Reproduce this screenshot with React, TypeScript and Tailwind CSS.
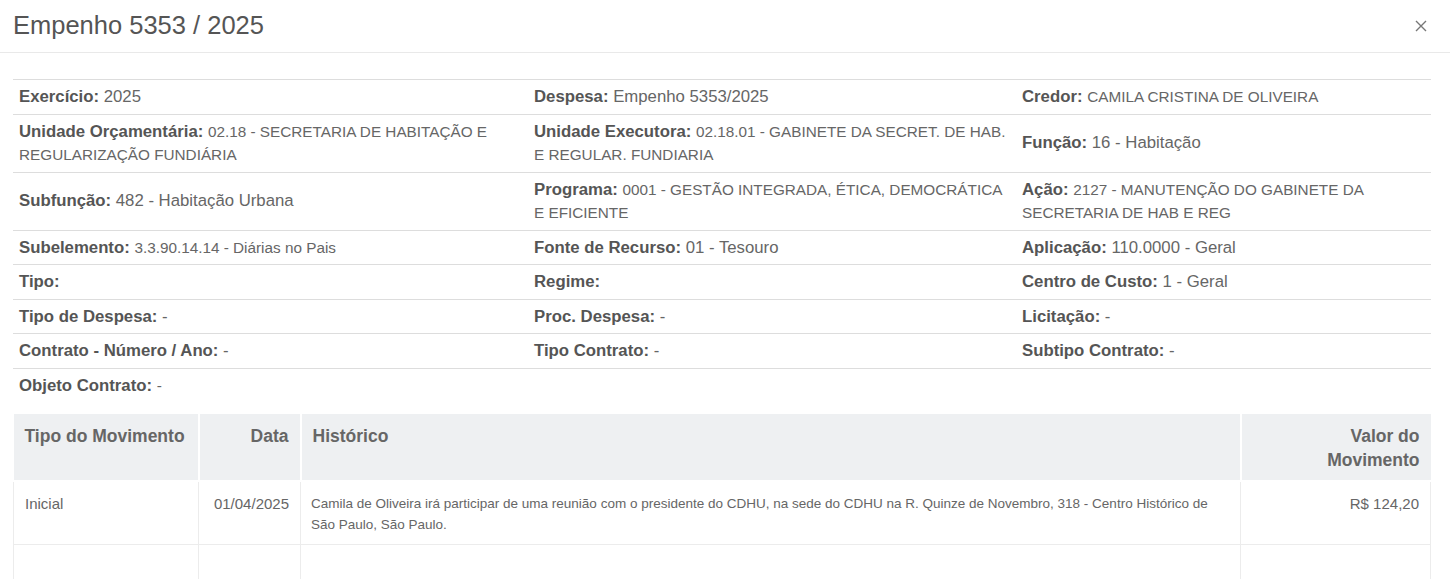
import React from 'react'

type Field = {
  label: string
  value?: string
  small?: boolean
}

const rows: Field[][] = [
  [
    { label: 'Exercício', value: '2025' },
    { label: 'Despesa', value: 'Empenho 5353/2025' },
    { label: 'Credor', value: 'CAMILA CRISTINA DE OLIVEIRA', small: true },
  ],
  [
    { label: 'Unidade Orçamentária', value: '02.18 - SECRETARIA DE HABITAÇÃO E REGULARIZAÇÃO FUNDIÁRIA', small: true },
    { label: 'Unidade Executora', value: '02.18.01 - GABINETE DA SECRET. DE HAB. E REGULAR. FUNDIARIA', small: true },
    { label: 'Função', value: '16 - Habitação' },
  ],
  [
    { label: 'Subfunção', value: '482 - Habitação Urbana' },
    { label: 'Programa', value: '0001 - GESTÃO INTEGRADA, ÉTICA, DEMOCRÁTICA E EFICIENTE', small: true },
    { label: 'Ação', value: '2127 - MANUTENÇÃO DO GABINETE DA SECRETARIA DE HAB E REG', small: true },
  ],
  [
    { label: 'Subelemento', value: '3.3.90.14.14 - Diárias no Pais', small: true },
    { label: 'Fonte de Recurso', value: '01 - Tesouro' },
    { label: 'Aplicação', value: '110.0000 - Geral' },
  ],
  [{ label: 'Tipo' }, { label: 'Regime' }, { label: 'Centro de Custo', value: '1 - Geral' }],
  [
    { label: 'Tipo de Despesa', value: '-' },
    { label: 'Proc. Despesa', value: '-' },
    { label: 'Licitação', value: '-' },
  ],
  [
    { label: 'Contrato - Número / Ano', value: '-' },
    { label: 'Tipo Contrato', value: '-' },
    { label: 'Subtipo Contrato', value: '-' },
  ],
]

const FieldCell = ({ field }: { field: Field }) => (
  <td className="border-t border-[#dddddd] px-[6px] py-[5px] align-middle leading-[23.5px]">
    <span className="font-bold text-[#555]">{field.label}: </span>
    {field.value && (
      <span className={field.small ? 'text-[15.3px] text-[#666]' : 'text-[#666]'}>{field.value}</span>
    )}
  </td>
)

const App = () => {
  return (
    <div className="w-[1450px] min-h-[579px] bg-white font-['Liberation_Sans',Arial,sans-serif] text-[#666]">
      {/* header */}
      <div className="flex h-[53px] items-center justify-between border-b border-[#e9e9e9] pl-[13px] pr-[22px]">
        <h4 className="text-[25.5px] leading-none text-[#555]">Empenho 5353 / 2025</h4>
        <button className="flex h-[14px] w-[14px] items-center justify-center text-[#777]">
          <svg width="12" height="12" viewBox="0 0 12 12" fill="none" stroke="currentColor" strokeWidth="1.4">
            <path d="M1 1l10 10M11 1L1 11" />
          </svg>
        </button>
      </div>

      {/* body */}
      <div className="pl-[13px] pr-[19px] pt-[26px]">
        <table className="mb-[12px] w-full table-fixed border-collapse text-[16.75px]">
          <colgroup>
            <col className="w-[515px]" />
            <col className="w-[488px]" />
            <col />
          </colgroup>
          <tbody>
            {rows.map((row, i) => (
              <tr key={i}>
                {row.map((f) => (
                  <FieldCell key={f.label} field={f} />
                ))}
              </tr>
            ))}
            <tr>
              <FieldCell field={{ label: 'Objeto Contrato', value: '-', small: true }} />
              <td className="border-t border-[#dddddd]" />
              <td className="border-t border-[#dddddd]" />
            </tr>
          </tbody>
        </table>

        <table className="w-full table-fixed border-collapse">
          <colgroup>
            <col className="w-[185px]" />
            <col className="w-[102px]" />
            <col />
            <col className="w-[190px]" />
          </colgroup>
          <thead>
            <tr className="bg-[#eef0f2] text-[17.5px] font-bold leading-[24px] text-[#666]">
              <th className="border-b-2 border-r-2 border-white px-[11px] pb-[8px] pt-[10px] text-left align-top">
                Tipo do Movimento
              </th>
              <th className="border-b-2 border-r-2 border-white px-[11px] pb-[8px] pt-[10px] text-right align-top">
                Data
              </th>
              <th className="border-b-2 border-r-2 border-white px-[11px] pb-[8px] pt-[10px] text-left align-top">
                Histórico
              </th>
              <th className="border-b-2 border-white px-[11px] pb-[8px] pt-[10px] text-right align-top">
                Valor do
                <br />
                Movimento
              </th>
            </tr>
          </thead>
          <tbody className="text-[15px] leading-[21px] text-[#666]">
            <tr>
              <td className="border border-t-0 border-[#ececec] px-[11px] pb-[9px] pt-[11px] align-top">Inicial</td>
              <td className="border border-t-0 border-[#ececec] px-[11px] pb-[9px] pt-[11px] text-right align-top">
                01/04/2025
              </td>
              <td className="border border-t-0 border-[#ececec] px-[10px] pb-[9px] pt-[11px] align-top text-[13.5px]">
                Camila de Oliveira irá participar de uma reunião com o presidente do CDHU, na sede do CDHU na R. Quinze de
                Novembro, 318 - Centro Histórico de São Paulo, São Paulo.
              </td>
              <td className="border border-t-0 border-[#ececec] px-[11px] pb-[9px] pt-[11px] text-right align-top">
                R$ 124,20
              </td>
            </tr>
            <tr className="h-[62px]">
              <td className="border border-[#ececec]" />
              <td className="border border-[#ececec]" />
              <td className="border border-[#ececec]" />
              <td className="border border-[#ececec]" />
            </tr>
          </tbody>
        </table>
      </div>
    </div>
  )
}

export default App
